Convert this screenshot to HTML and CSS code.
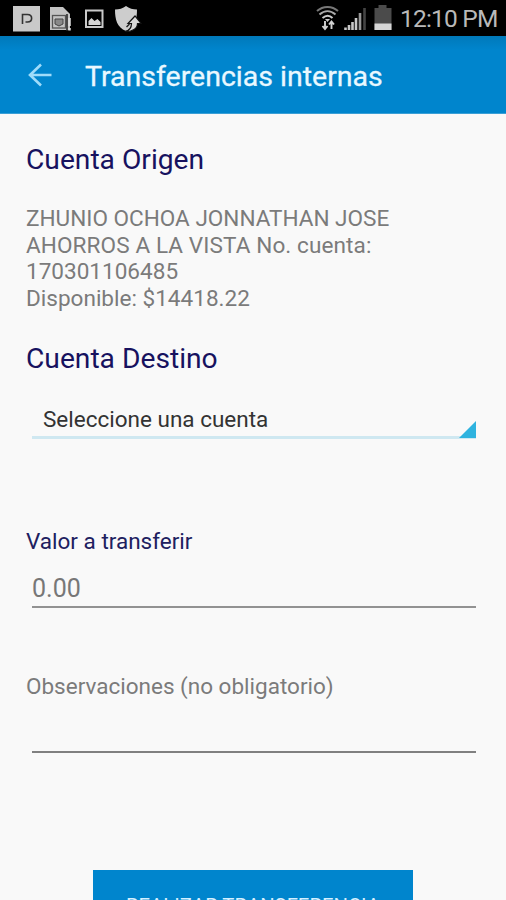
FILE: index.html
```html
<!DOCTYPE html>
<html lang="es">
<head>
<meta charset="utf-8">
<title>Transferencias internas</title>
<link rel="stylesheet" href="styles.css">
</head>
<body>
<div class="screen">
  <header class="status">
    <svg class="notices" width="150" height="36" viewBox="0 0 150 36" aria-hidden="true">
      <rect x="13" y="6" width="27" height="25.500" fill="#c9c9c9"/>
      <path d="M22.500 24v-9.500h5c5.500 0 5.500 7.500 0 7.500h-2" fill="none" stroke="#333" stroke-width="1.600"/>
      <path d="M50 7h13l7 7v16H50z" fill="#c3c3c3"/>
      <rect x="52.500" y="15.500" width="13" height="12.500" fill="none" stroke="#555" stroke-width="1.300"/>
      <path d="M55 19h8v5l-4 2-4-2z" fill="#888" stroke="#444"/>
      <path d="M67 14v17" stroke="#222" stroke-width="1.500"/>
      <path d="M69.500 18v8M69.500 28v2.500" stroke="#ddd" stroke-width="2.500"/>
      <rect x="86" y="10.500" width="16.500" height="16.500" fill="none" stroke="#c9c9c9" stroke-width="2"/>
      <path d="M88.500 25v-4l3-3 3 3 3-2 3 3v3z" fill="#d5d5d5"/>
      <path d="M126 6c3 2.500 7 3.500 11 3.500 0 10-2 18-11 21.500-9-3.500-11-11.500-11-21.500 4 0 8-1 11-3.500z" fill="#cdcdcd"/>
      <path d="M125 31.500c5-1 6.500-4.500 6.500-8H128l7-7.500 6 7.500h-3.500c0 5-5 8.500-12.500 8z" fill="#d8d8d8" stroke="#111" stroke-width="1.200"/>
      <path d="M126.500 27l3-3" stroke="#222" stroke-width="1.500"/>
    </svg>
    <svg class="signals" width="86" height="36" viewBox="310 0 86 36" aria-hidden="true">
      <g fill="none" stroke-width="2">
        <path d="M318 11c6-5.500 15-5.500 21 0" stroke="#777"/>
        <path d="M320.500 14.500c5-4.500 11-4.500 16 0" stroke="#aaa"/>
        <path d="M323.500 18c3.500-3 7-3 10 0" stroke="#ccc"/>
      </g>
      <path d="M326 19h5l-2.500 3z" fill="#ccc"/>
      <path d="M326 21v8M323.500 26l2.500 3 2.500-3M332.500 29v-8M330 24.500l2.500-3 2.500 3" fill="none" stroke="#d4d4d4" stroke-width="1.900"/>
      <path d="M346.500 30v-2.500M350 30v-5M353.500 30v-8M357 30v-12" stroke="#c8c8c8" stroke-width="2.600"/>
      <path d="M361 30V13" stroke="#999" stroke-width="2.600"/>
      <path d="M365.500 30V8" stroke="#444" stroke-width="2.600"/>
      <path d="M375.500 8h4V5h8v3h5v22h-17z" fill="#4b4b4b"/>
      <path d="M375.500 23.500h17V30h-17z" fill="#d6d6d6"/>
    </svg>
    <span class="clock">12:10 PM</span>
  </header>
  <nav class="toolbar">
    <svg class="back" width="24" height="24" viewBox="0 0 24 24" role="img" aria-label="Atrás"><path d="M23.500 12H2M13 1.500L2 12l11 10.500" fill="none" stroke="#9fdcfa" stroke-width="2.600"/></svg>
    <h1>Transferencias internas</h1>
  </nav>
  <main>
    <h2 class="origin">Cuenta Origen</h2>
    <div class="account">
      <div>ZHUNIO OCHOA JONNATHAN JOSE</div>
      <div class="number">AHORROS A LA VISTA No. cuenta:</div>
      <div>170301106485</div>
      <div>Disponible: $14418.22</div>
    </div>
    <h2 class="target">Cuenta Destino</h2>
    <div class="spinner"><span>Seleccione una cuenta</span><svg width="17" height="17" viewBox="0 0 17 17" aria-hidden="true"><path d="M17 0v17H0z" fill="#2fb3df"/></svg></div>
    <div class="label amount-label">Valor a transferir</div>
    <div class="field amount">0.00</div>
    <div class="label notes-label">Observaciones (no obligatorio)</div>
    <div class="field notes"></div>
    <div class="submit">REALIZAR TRANSFERENCIA</div>
  </main>
</div>
</body>
</html>
```
FILE: styles.css
```css
* { box-sizing: border-box; }
body { margin: 0; font-family: Roboto, sans-serif; background: #f9f9f9; }
.screen { width: 506px; height: 900px; overflow: hidden; }
.status { height: 36px; background: #000; display: flex; }
.notices, .signals { flex: none; }
.signals { margin-left: 159px; }
.clock { margin-left: 5px; font-size: 24.5px; letter-spacing: -.8px; line-height: 38px; color: #b9b9b9; white-space: nowrap; }
.toolbar { height: 78px; display: flex; align-items: center; padding: 1px 0 0 28px; background: linear-gradient(#0079ba, #0085cd 14px); border-bottom: 1px solid #3a9fd6; }
.back { margin-right: 33px; }
h1, h2 { margin: 0; font-weight: 400; white-space: nowrap; }
h1 { padding-top: 3px; font-size: 28.5px; line-height: 40px; color: #e9f8ff; -webkit-text-stroke: .3px #e9f8ff; }
main { padding: 0 30px 0 26px; white-space: nowrap; }
h2 { font-size: 28.2px; line-height: 32px; color: #17125f; }
.origin { margin-top: 30px; }
.account { margin-top: 30px; font-size: 22.55px; line-height: 26.7px; color: #7b7b7b; }
.number { letter-spacing: .1px; }
.target { margin-top: 30px; }
.spinner { margin: 29px 0 0 6px; height: 35px; padding-left: 11px; border-bottom: 3px solid #cfe8f1; display: flex; justify-content: space-between; font-size: 22.5px; line-height: 30px; color: #333; }
.spinner svg { margin-top: 17px; flex: none; }
.label { font-size: 22.5px; line-height: 30px; }
.amount-label { margin-top: 87px; color: #20205f; }
.field { margin-left: 6px; border-bottom: 2px solid #929292; }
.amount { margin-top: 16px; height: 36px; font-size: 25px; line-height: 33px; color: #777; }
.notes-label { margin-top: 63px; color: #7b7b7b; }
.notes { height: 52px; border-color: #808080; }
.submit { width: 320px; height: 70px; margin: 117px 0 0 67px; background: #0085cd; color: #d5f0ff; text-align: center; font-size: 20.3px; line-height: 72px; }
```
